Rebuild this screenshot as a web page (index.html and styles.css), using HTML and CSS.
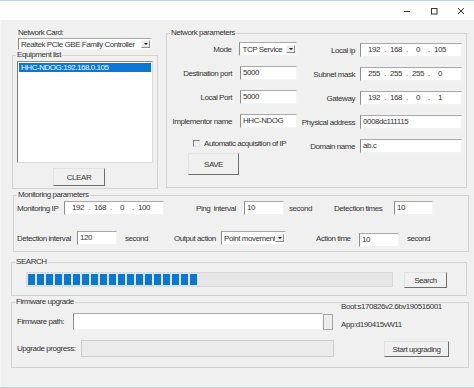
FILE: index.html
```html
<!DOCTYPE html>
<html lang="en">
<head>
    <meta charset="UTF-8">
    <title>HHC-NDOG config</title>
    <link rel="stylesheet" href="styles.css">
</head>
<body>
<div class="window">
    <div class="titlebar">
        <span class="tb-btn"><svg width="10" height="10" viewBox="0 0 10 10"><path d="M2 5.5h6" stroke="#333" stroke-width="1"/></svg></span>
        <span class="tb-btn"><svg width="10" height="10" viewBox="0 0 10 10"><rect x="2.5" y="2.5" width="5.5" height="5.5" fill="none" stroke="#333" stroke-width="1"/></svg></span>
        <span class="tb-btn"><svg width="10" height="10" viewBox="0 0 10 10"><path d="M2 2l6 6M8 2l-6 6" stroke="#333" stroke-width="1"/></svg></span>
    </div>

    <div class="client">
        <div class="top">
            <div class="left-col">
                <div class="caption">Network Card:</div>
                <div class="combo combo-card"><span class="combo-text">Realtek PCIe GBE Family Controller</span><span class="combo-btn"></span></div>
                <fieldset class="group group-equip">
                    <legend>Equipment list</legend>
                    <div class="listbox">
                        <div class="list-item selected">HHC-NDOG:192.168.0.105</div>
                    </div>
                    <button class="btn btn-clear">CLEAR</button>
                </fieldset>
            </div>

            <fieldset class="group group-net">
                <legend>Network parameters</legend>
                <div class="net-cols">
                    <div class="net-left">
                        <div class="field"><label>Mode</label><div class="combo combo-mode"><span class="combo-text">TCP Service</span><span class="combo-btn"></span></div></div>
                        <div class="field"><label>Destination port</label><div class="edit">5000</div></div>
                        <div class="field"><label>Local Port</label><div class="edit">5000</div></div>
                        <div class="field"><label>Implementor name</label><div class="edit">HHC-NDOG</div></div>
                        <div class="check-row"><span class="checkbox"></span>Automatic acquisition of IP</div>
                        <button class="btn btn-save">SAVE</button>
                    </div>
                    <div class="net-right">
                        <div class="field"><label>Local ip</label><div class="edit ip"><span class="seg">192</span><span class="dot">.</span><span class="seg">168</span><span class="dot">.</span><span class="seg">0</span><span class="dot">.</span><span class="seg">105</span></div></div>
                        <div class="field"><label>Subnet mask</label><div class="edit ip"><span class="seg">255</span><span class="dot">.</span><span class="seg">255</span><span class="dot">.</span><span class="seg">255</span><span class="dot">.</span><span class="seg">0</span></div></div>
                        <div class="field"><label>Gateway</label><div class="edit ip"><span class="seg">192</span><span class="dot">.</span><span class="seg">168</span><span class="dot">.</span><span class="seg">0</span><span class="dot">.</span><span class="seg">1</span></div></div>
                        <div class="field"><label>Physical address</label><div class="edit">0008dc111115</div></div>
                        <div class="field"><label>Domain name</label><div class="edit">ab.c</div></div>
                    </div>
                </div>
            </fieldset>
        </div>

        <fieldset class="group group-monitor">
            <legend>Monitoring parameters</legend>
            <div class="mon-row mon-row1">
                <span class="lbl w-monip">Monitoring IP</span>
                <div class="edit ip w-ip"><span class="seg">192</span><span class="dot">.</span><span class="seg">168</span><span class="dot">.</span><span class="seg">0</span><span class="dot">.</span><span class="seg">100</span></div>
                <span class="lbl w-ping">Ping&nbsp; interval</span>
                <div class="edit w-num">10</div>
                <span class="lbl w-sec1">second</span>
                <span class="lbl w-dtimes">Detection times</span>
                <div class="edit w-num2">10</div>
            </div>
            <div class="mon-row mon-row2">
                <span class="lbl w-dint">Detection interval</span>
                <div class="edit w-num">120</div>
                <span class="lbl w-sec2">second</span>
                <span class="lbl w-out">Output action</span>
                <div class="combo combo-out"><span class="combo-text">Point movement</span><span class="combo-btn"></span></div>
                <span class="lbl w-act">Action time</span>
                <div class="edit w-num act-edit">10</div>
                <span class="lbl w-sec3">second</span>
            </div>
        </fieldset>

        <fieldset class="group group-search">
            <legend>SEARCH</legend>
            <div class="search-row">
                <div class="progress"><div class="progress-fill"></div></div>
                <button class="btn btn-search">Search</button>
            </div>
        </fieldset>

        <fieldset class="group group-firmware">
            <legend>Firmware upgrade</legend>
            <div class="fw-cols">
                <div class="fw-left">
                    <div class="fw-row fw-path">
                        <span class="lbl w-path">Firmware path:</span>
                        <div class="edit w-pathedit"></div>
                        <span class="browse"></span>
                    </div>
                    <div class="fw-row fw-prog">
                        <span class="lbl w-upg">Upgrade progress:</span>
                        <div class="upg-bar"></div>
                    </div>
                </div>
                <div class="fw-right">
                    <div class="ver ver-boot">Boot:s170826v2.6bv190516001</div>
                    <div class="ver ver-app">App:d190415vW11</div>
                    <button class="btn btn-upgrade">Start upgrading</button>
                </div>
            </div>
        </fieldset>
    </div>
</div>
</body>
</html>
```

FILE: styles.css
```css
* {
    margin: 0;
    padding: 0;
    box-sizing: border-box;
}

body {
    width: 474px;
    height: 388px;
    overflow: hidden;
    background: #fff;
    font-family: "Liberation Sans", Arial, sans-serif;
    font-size: 8px;
    letter-spacing: -0.45px;
    color: #333;
}

.window {
    height: 388px;
    border-top: 1px solid #b7d4ef;
    border-bottom: 1px solid #b7d4ef;
    display: flex;
    flex-direction: column;
}

/* title bar */
.titlebar {
    height: 19px;
    background: #fff;
    display: flex;
    justify-content: flex-end;
}
.tb-btn {
    width: 27px;
    height: 19px;
    display: flex;
    align-items: center;
    justify-content: center;
}

.client {
    flex: 1;
    background: #f0f0f0;
    border-left: 1px solid #f7f7f7;
}

/* group boxes */
.group {
    border: 1px solid #d3d3d3;
    padding: 0;
    min-width: 0;
}
.group legend {
    margin-left: 3px;
    padding: 0 1px;
    line-height: 8px;
}

.top {
    display: flex;
    margin-top: 8px;
    margin-left: 11px;
}
.left-col {
    width: 146px;
}
.caption {
    margin-left: 6px;
    line-height: 9px;
}

/* inputs */
.edit {
    height: 14px;
    background: #fff;
    border: 1px solid;
    border-color: #a8a8a8 #f2f2f2 #f2f2f2 #8c8c8c;
    padding-left: 2px;
    line-height: 12px;
    white-space: nowrap;
}
.ip {
    display: flex;
    padding-left: 4px;
}
.ip .seg {
    width: 18px;
    text-align: center;
}
.ip .dot {
    width: 4px;
    text-align: center;
}

.combo {
    display: flex;
    align-items: center;
    background: #fff;
    border: 1px solid;
    border-color: #a8a8a8 #f2f2f2 #f2f2f2 #8c8c8c;
    padding-left: 2px;
}
.combo-text {
    flex: 1;
    overflow: hidden;
    white-space: nowrap;
}
.combo-btn {
    width: 9px;
    height: 8px;
    margin-right: 1px;
    background: #ececec;
    border: 1px solid;
    border-color: #f8f8f8 #8a8a8a #8a8a8a #f8f8f8;
    display: flex;
    align-items: center;
    justify-content: center;
}
.combo-btn::after {
    content: "";
    border-left: 2px solid transparent;
    border-right: 2px solid transparent;
    border-top: 2px solid #111;
}
.combo-card {
    width: 134px;
    height: 12px;
    margin: 1px 0 0 6px;
}
.combo-mode {
    width: 58px;
    height: 14px;
}
.combo-out {
    width: 65px;
    height: 14px;
}

/* buttons */
.btn {
    display: block;
    font: inherit;
    letter-spacing: inherit;
    color: #333;
    background: #f0f0f0;
    border: 1px solid;
    border-color: #e2e2e2 #6e6e6e #6e6e6e #e2e2e2;
}

/* equipment list */
.group-equip {
    margin-top: 1px;
    width: 146px;
    height: 138px;
}
.listbox {
    margin: 2px 0 0 4px;
    width: 136px;
    height: 102px;
    background: #fff;
    border: 1px solid;
    border-color: #8a8a8a #dcdcdc #dcdcdc #7a7a7a;
    padding: 1px;
}
.list-item {
    height: 9px;
    line-height: 9px;
    padding-left: 2px;
}
.list-item.selected {
    background: #0a78d7;
    color: #fff;
}
.btn-clear {
    margin: 5px 0 0 40px;
    width: 52px;
    height: 18px;
}

/* network parameters */
.group-net {
    margin: 1px 0 0 8px;
    width: 301px;
    height: 159px;
}
.net-cols {
    display: flex;
}
.net-left {
    width: 130px;
    padding-top: 5px;
}
.net-right {
    padding-top: 6px;
}
.field {
    display: flex;
    align-items: center;
    height: 14px;
    margin-bottom: 10px;
}
.net-left label {
    width: 65px;
    text-align: right;
    margin-right: 8px;
}
.net-left .edit {
    width: 57px;
}
.net-right label {
    width: 58px;
    text-align: right;
    margin-right: 5px;
}
.net-right .edit {
    width: 102px;
}
.check-row {
    display: flex;
    align-items: center;
    height: 10px;
    margin-top: 2px;
    padding-left: 26px;
}
.checkbox {
    width: 7px;
    height: 7px;
    margin-right: 4px;
    border-top: 1px solid #7a7a7a;
    border-left: 1px solid #7a7a7a;
    border-right: 1px solid #e4e4e4;
    border-bottom: 1px solid #e4e4e4;
}
.btn-save {
    margin: 5px 0 0 21px;
    width: 51px;
    height: 22px;
}

/* monitoring */
.group-monitor {
    margin: 2px 0 0 12px;
    width: 456px;
    height: 61px;
}
.mon-row {
    display: flex;
    align-items: center;
    padding-left: 3px;
    height: 14px;
}
.mon-row1 {
    margin-top: 2px;
}
.mon-row2 {
    margin-top: 16px;
}
.lbl {
    white-space: nowrap;
}
.w-monip { width: 47px; }
.w-ip { width: 100px; }
.w-ping { width: 48px; margin-left: 32px; }
.w-num { width: 40px; }
.w-sec1 { width: 45px; margin-left: 5px; }
.w-dtimes { width: 60px; }
.w-num2 { width: 39px; }
.w-dint { width: 60px; }
.w-sec2 { width: 49px; margin-left: 8px; }
.w-out { width: 47px; }
.w-act { width: 43px; margin-left: 30px; }
.act-edit { margin-top: 3px; }
.w-sec3 { margin-left: 8px; }

/* search */
.group-search {
    margin: 6px 0 0 10px;
    width: 456px;
    height: 38px;
}
.search-row {
    display: flex;
    margin-top: 6px;
    padding-left: 14px;
}
.progress {
    width: 367px;
    height: 15px;
    background: #e6e6e6;
    border: 1px solid #d8d8d8;
    padding: 1px;
}
.progress-fill {
    width: 169px;
    height: 100%;
    background: repeating-linear-gradient(90deg, #0b76d4 0 7px, transparent 7px 9px);
}
.btn-search {
    margin-left: 11px;
    width: 43px;
    height: 16px;
}

/* firmware */
.group-firmware {
    margin: 2px 0 0 10px;
    width: 458px;
    height: 70px;
}
.fw-cols {
    display: flex;
}
.fw-left {
    padding-left: 5px;
}
.fw-row {
    display: flex;
    align-items: center;
    height: 17px;
}
.fw-path {
    margin-top: 7px;
}
.fw-prog {
    margin-top: 10px;
}
.w-path { width: 56px; }
.w-pathedit {
    width: 250px;
    height: 17px;
}
.browse {
    width: 10px;
    height: 16px;
    background: #ececec;
    border: 1px solid #a6a6a6;
}
.w-upg { width: 64px; }
.upg-bar {
    width: 253px;
    height: 17px;
    background: #ebebeb;
    border: 1px solid #cdcdcd;
}
.fw-right {
    margin: -4px 0 0 7px;
}
.ver {
    line-height: 10px;
    white-space: nowrap;
}
.ver-app {
    margin-top: 8px;
}
.btn-upgrade {
    margin: 11px 0 0 43px;
    width: 65px;
    height: 16px;
}
```
